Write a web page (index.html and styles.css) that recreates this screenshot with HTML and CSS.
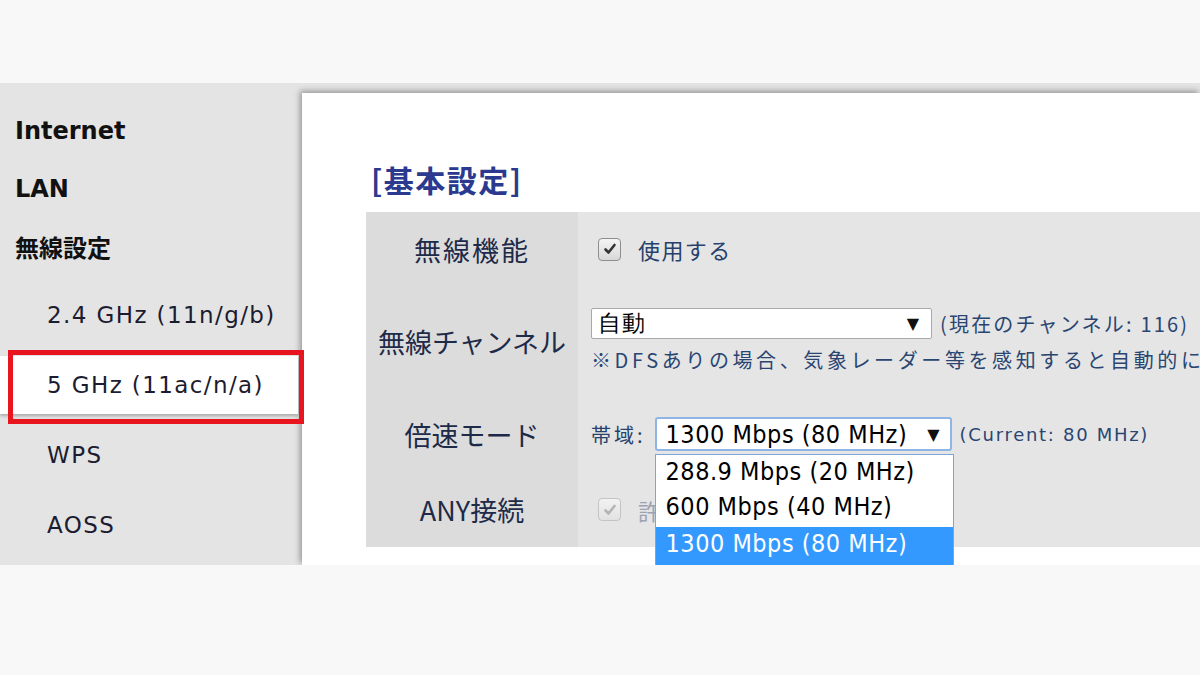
FILE: index.html
```html
<!DOCTYPE html>
<html lang="ja">
<head>
    <meta charset="UTF-8">
    <meta name="viewport" content="width=device-width, initial-scale=1.0">
    <title>無線設定 - 5 GHz</title>
    <link rel="stylesheet" href="styles.css">
</head>
<body>
    <!-- Top band -->
    <div class="band-top"></div>

    <div class="layout">
        <!-- Side menu -->
        <div class="sidebar">
            <div class="nav-head">Internet</div>
            <div class="nav-head">LAN</div>
            <div class="nav-head jp">無線設定</div>
            <div class="nav-sub">2.4 GHz (11n/g/b)</div>
            <div class="nav-sub active">5 GHz (11ac/n/a)</div>
            <div class="nav-sub">WPS</div>
            <div class="nav-sub">AOSS</div>
        </div>

        <!-- Main panel -->
        <div class="main">
            <h2 class="section-title">[基本設定]</h2>

            <div class="settings">
                <div class="row row-func">
                    <div class="label">無線機能</div>
                    <div class="value">
                        <span class="check">
                            <svg width="14" height="14" viewBox="0 0 14 14"><path d="M2.5 7.5 L5.5 10.5 L11.5 3" fill="none" stroke="#333" stroke-width="2.6" stroke-linecap="round" stroke-linejoin="round"/></svg>
                        </span>
                        <span class="value-text">使用する</span>
                    </div>
                </div>

                <div class="row row-channel">
                    <div class="label">無線チャンネル</div>
                    <div class="value value-stack">
                        <div class="line">
                            <div class="select select-channel">
                                <span class="select-text jp">自動</span>
                                <span class="arrow">▼</span>
                            </div>
                            <span class="hint">(現在のチャンネル: 116)</span>
                        </div>
                        <div class="note">※DFSありの場合、気象レーダー等を感知すると自動的に</div>
                    </div>
                </div>

                <div class="row row-speed">
                    <div class="label">倍速モード</div>
                    <div class="value">
                        <span class="value-text small">帯域:</span>
                        <div class="select-wrap">
                            <div class="select select-band">
                                <span class="select-text">1300 Mbps (80 MHz)</span>
                                <span class="arrow">▼</span>
                            </div>
                            <ul class="dropdown">
                                <li>288.9 Mbps (20 MHz)</li>
                                <li>600 Mbps (40 MHz)</li>
                                <li class="selected">1300 Mbps (80 MHz)</li>
                            </ul>
                        </div>
                        <span class="hint latin">(Current: 80 MHz)</span>
                    </div>
                </div>

                <div class="row row-any">
                    <div class="label">ANY接続</div>
                    <div class="value">
                        <span class="check disabled">
                            <svg width="14" height="14" viewBox="0 0 14 14"><path d="M2.5 7.5 L5.5 10.5 L11.5 3" fill="none" stroke="#b4b4b4" stroke-width="2.6" stroke-linecap="round" stroke-linejoin="round"/></svg>
                        </span>
                        <span class="value-text">許可する</span>
                    </div>
                </div>
            </div>
        </div>
    </div>

    <!-- Bottom band -->
    <div class="band-bottom"></div>
</body>
</html>
```

FILE: styles.css
```css
html, body {
    margin: 0;
    padding: 0;
    overflow: hidden;
}

body {
    background-color: #f8f8f8;
    font-family: "DejaVu Sans", "Noto Sans CJK JP", sans-serif;
    color: #1d2a48;
}

.jp {
    font-family: "Noto Sans CJK JP", sans-serif;
}

.band-top {
    height: 83px;
    background-color: #f8f8f8;
}

.band-bottom {
    height: 110px;
    background-color: #f8f8f8;
}

/* Layout */
.layout {
    display: flex;
    height: 482px;
    overflow: hidden;
    background-color: #e4e4e4;
}

/* Side menu */
.sidebar {
    width: 300px;
    flex-shrink: 0;
    padding-top: 19px;
    box-sizing: border-box;
}

.nav-head {
    height: 58px;
    line-height: 58px;
    padding-left: 15px;
    font-size: 24px;
    font-weight: bold;
    color: #111;
}

.nav-head.jp {
    font-size: 24px;
}

.nav-sub {
    height: 58px;
    line-height: 58px;
    padding-left: 47px;
    font-size: 23px;
    letter-spacing: 1.4px;
    color: #1c1c30;
    margin-top: 12px;
    box-sizing: border-box;
}

.nav-head + .nav-sub {
    margin-top: 10px;
}

.nav-sub.active {
    position: relative;
    background-color: #fff;
    width: 298px;
    box-shadow: 0 2px 3px rgba(0, 0, 0, 0.25);
}

.nav-sub.active::after {
    content: "";
    position: absolute;
    left: 8px;
    top: -6px;
    width: 296px;
    height: 74px;
    border: 5px solid #e8141e;
    box-sizing: border-box;
    z-index: 2;
}

/* Main panel */
.main {
    flex: 1;
    min-width: 0;
    margin-top: 10px;
    margin-left: 2px;
    background-color: #fff;
    box-shadow: -2px -2px 6px rgba(0, 0, 0, 0.35);
    padding: 68px 0 0 64px;
    overflow: hidden;
}

.section-title {
    margin: 0 0 15px 5px;
    font-family: "Noto Sans CJK JP", sans-serif;
    font-size: 30px;
    line-height: 36px;
    letter-spacing: 1.5px;
    font-weight: bold;
    color: #2b3a8e;
}

.settings {
    width: 1000px;
    font-family: "Noto Sans CJK JP", sans-serif;
}

.row {
    display: grid;
    grid-template-columns: 212px 1fr;
}

.row-func { height: 74px; }
.row-channel { height: 110px; }
.row-speed { height: 76px; }
.row-any { height: 75px; }

.label {
    background-color: #dcdcdc;
    display: flex;
    align-items: center;
    justify-content: center;
    font-size: 27px;
    color: #1d2a48;
}

.row-func .label {
    letter-spacing: 2px;
}

.value {
    background-color: #e5e5e5;
    display: flex;
    align-items: center;
    padding-left: 13px;
}

.row-func .value,
.row-any .value {
    padding-left: 20px;
}

.value-stack {
    flex-direction: column;
    align-items: flex-start;
    justify-content: flex-start;
    padding-top: 22px;
    box-sizing: border-box;
}

.line {
    display: flex;
    align-items: center;
}

.value-text {
    font-size: 22px;
    letter-spacing: 1.4px;
    color: #26416b;
    margin-left: 17px;
}

.value-text.small {
    font-size: 20px;
    letter-spacing: 3px;
    margin-left: 0;
}

.row-any .value-text {
    color: #9aa3b2;
}

/* Checkbox */
.check {
    width: 21px;
    height: 21px;
    border: 1px solid #8e8e8e;
    border-radius: 4px;
    background: linear-gradient(#f4f4f4, #d8d8d8);
    display: flex;
    align-items: center;
    justify-content: center;
}

.check.disabled {
    border-color: #c4c4c4;
    background: linear-gradient(#f2f2f2, #e2e2e2);
}

/* Select boxes */
.select {
    display: flex;
    align-items: center;
    justify-content: space-between;
    background-color: #fff;
    box-sizing: border-box;
    color: #000;
}

.select-channel {
    width: 341px;
    height: 31px;
    border: 1px solid #a9a9a9;
    border-radius: 2px;
    padding: 0 12px 0 6px;
}

.select-channel .select-text {
    font-size: 23px;
    letter-spacing: 1px;
}

.arrow {
    font-family: "DejaVu Sans", sans-serif;
    font-size: 16px;
    color: #111;
}

.hint {
    font-size: 20px;
    letter-spacing: 2.2px;
    color: #2a4572;
    margin-left: 8px;
    white-space: nowrap;
}

.hint.latin {
    font-family: "DejaVu Sans", sans-serif;
    font-size: 18px;
    letter-spacing: 1.7px;
    margin-left: 8px;
}

.note {
    margin-top: 8px;
    font-size: 20px;
    line-height: 26px;
    letter-spacing: 3.6px;
    white-space: nowrap;
    color: #2a4572;
}

.select-wrap {
    position: relative;
    margin-left: 9px;
}

.select-band {
    width: 297px;
    height: 34px;
    border: 2px solid #8fb4e6;
    border-radius: 3px;
    padding: 0 10px 0 9px;
}

.select-text {
    font-family: "DejaVu Sans Condensed", "Liberation Sans Narrow", "DejaVu Sans", sans-serif;
    font-size: 25px;
    letter-spacing: 0.5px;
}

.dropdown {
    position: absolute;
    top: 37px;
    left: 0;
    width: 299px;
    margin: 0;
    padding: 0;
    list-style: none;
    background-color: #fff;
    border: 1px solid #7ba5dd;
    box-sizing: border-box;
    z-index: 5;
}

.dropdown li {
    height: 35px;
    line-height: 34px;
    padding-left: 10px;
    font-family: "DejaVu Sans Condensed", "Liberation Sans Narrow", "DejaVu Sans", sans-serif;
    font-size: 25px;
    letter-spacing: 0.5px;
    color: #000;
}

.dropdown li.selected {
    margin-top: 2px;
    height: 40px;
    background-color: #3399ff;
    color: #fff;
}
```
